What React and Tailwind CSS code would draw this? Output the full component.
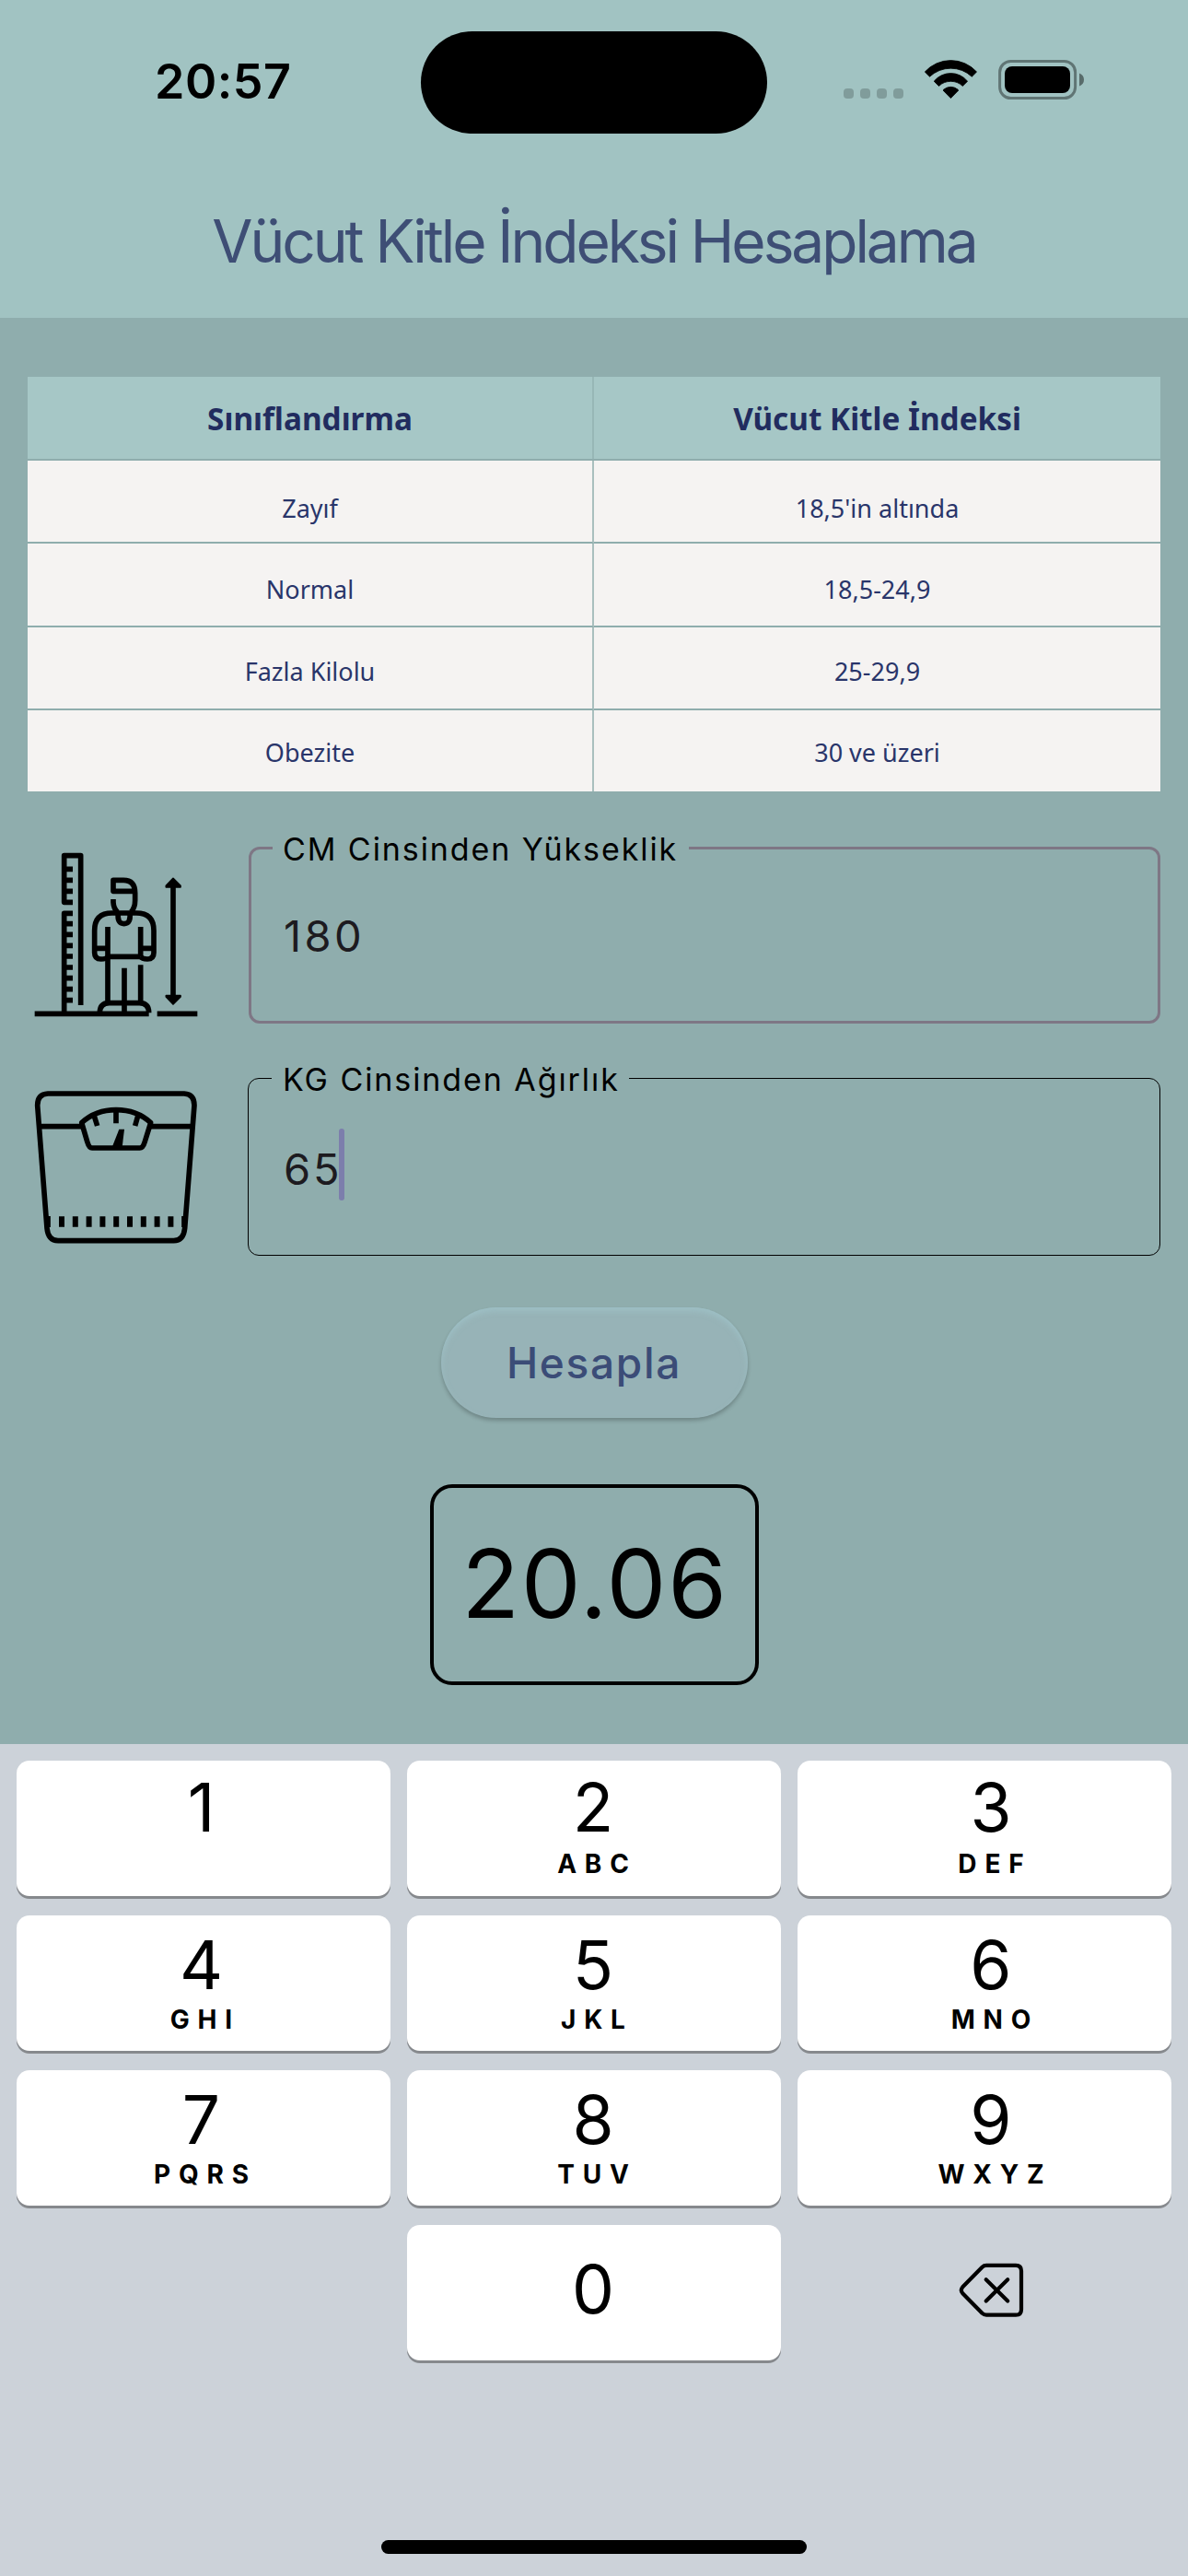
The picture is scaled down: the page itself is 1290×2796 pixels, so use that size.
import React from "react";

const ROWS = [
  { name: "Zayıf", range: "18,5'in altında", cls: "h-[90px] pt-[34px] border-b-2" },
  { name: "Normal", range: "18,5-24,9", cls: "h-[91px] pt-[32px] border-b-2" },
  { name: "Fazla Kilolu", range: "25-29,9", cls: "h-[90px] pt-[30px] border-b-2" },
  { name: "Obezite", range: "30 ve üzeri", cls: "h-[88px] pt-[28px]" },
];

const KEYS = [
  ["1", ""], ["2", "ABC"], ["3", "DEF"],
  ["4", "GHI"], ["5", "JKL"], ["6", "MNO"],
  ["7", "PQRS"], ["8", "TUV"], ["9", "WXYZ"],
];

const COLUMN_PADDING = ["pr-[5px]", "pr-[2px]", "pl-[14px]"];

function StatusBar() {
  return (
    <div className="grid h-[178px] grid-cols-[457px_376px_457px] items-start">
      <div className="pt-[59px] pl-[168px] text-[52px] leading-[60px] font-semibold tracking-[0.5px] text-black">20:57</div>
      <div className="mt-[33.5px] h-[111px] rounded-full bg-black" />
      <div className="flex pt-[64px] pl-[83px]">
        <div className="mt-[32px] flex gap-[7px]">
          {[0, 1, 2, 3].map((i) => (
            <div key={i} className="size-[11px] rounded-[4px] bg-black/20" />
          ))}
        </div>
        <svg className="ml-[22px]" width="59" height="45" viewBox="103 14 59 45" fill="#000" stroke="#000" strokeWidth="0.8" strokeLinejoin="round">
          <path d="M104.3 28A38 38 0 0 1 160.5 28L155.3 33.2A33.5 33.5 0 0 0 109.5 33.2Z" />
          <path d="M114.2 38.2A23.5 23.5 0 0 1 150.6 38.2L145.3 43.4A18.9 18.9 0 0 0 119.5 43.4Z" />
          <path d="M124 48A11.5 11.5 0 0 1 140.8 48L132.4 56.6Z" />
        </svg>
        <svg className="ml-[20px]" width="96" height="45" viewBox="182 14 96 45">
          <rect x="185.6" y="16.4" width="82" height="40.2" rx="12" fill="none" stroke="#000" strokeOpacity="0.4" strokeWidth="3" />
          <rect x="191" y="22" width="71" height="29" rx="8" fill="#000" />
          <path d="M272 29.5Q277 31.5 277 36.5Q277 41.5 272 43.5Z" fill="#000" fillOpacity="0.45" />
        </svg>
      </div>
    </div>
  );
}

function HeightIcon() {
  return (
    <svg className="block blur-[0.6px]" width="182" height="182" viewBox="105 99 546 546" fill="none" stroke="#000" strokeWidth="17" strokeLinecap="butt" strokeLinejoin="round">
      <path d="M237 268H209V116H263V603M209 160H237M209 196H237M209 232H237" />
      <path d="M209 631V304H237M209 338H237M209 373H237M209 409H237M209 444H237M209 480H237M209 515H237M209 551H237M209 587H237" />
      <path d="M113 631H485M512 631H643" />
      <path d="M440 232H369V196H402Q440 196 440 238V262Q440 286 427 300M369 258V268Q370 288 383 300" />
      <path d="M385 303Q381 338 404 338Q427 338 423 303" />
      <path d="M352 445Q346 453 329 453Q308 453 308 432V360Q308 303 365 303H444Q501 303 501 360V432Q501 453 480 453Q463 453 458 445M308 418H351M458 418H501" />
      <path d="M351 348V595M458 348V445M351 445H458M458 472V595M405 482V631" />
      <path d="M325 628Q325 596 356 596H454Q485 596 485 628" />
      <path d="M564 205V585" />
      <path d="M564 190L588 214V219H541V214ZM564 600L588 576V572H541V576Z" fill="#000" strokeWidth="5" />
    </svg>
  );
}

function ScaleIcon() {
  return (
    <svg className="block blur-[0.6px]" width="182" height="170" viewBox="105 875 546 510" fill="none" stroke="#000" strokeWidth="17" strokeLinejoin="round">
      <path d="M156 890H600Q633 892 633 928L602 1328Q598 1369 566 1369H189Q157 1369 153 1328L122 928Q122 892 156 890Z" />
      <path d="M128 997H268M490 997H627" />
      <path d="M266 985Q312 943 378 943Q446 943 491 985L472 1046Q466 1067 455 1067H300Q290 1067 284 1046Z" />
      <path d="M378 945V987M306 960L317 995M450 960L440 995" />
      <path d="M388 1006H405L398 1065H365Z" fill="#000" stroke="none" />
      <path d="M192 1307H570" strokeWidth="35" strokeDasharray="18 26.4" />
      <path d="M160 1289V1325M596 1289V1325" strokeWidth="9" />
    </svg>
  );
}

function ResultTable() {
  return (
    <div className="mt-[64px] h-[450px] overflow-hidden font-['Noto_Sans',sans-serif] text-[27px] leading-[36px] text-[#29356a]">
      <div className="grid h-[91px] grid-cols-[615px_615px] border-b-2 border-[#8fadad] bg-[#a6c7c6] text-center text-[33.3px] leading-[48px] font-bold text-[#212c5f]">
        <div className="border-r-2 border-[#97b7b6] pt-[21px]">Sınıflandırma</div>
        <div className="pt-[21px]">Vücut Kitle İndeksi</div>
      </div>
      {ROWS.map((row) => (
        <div key={row.name} className="grid grid-cols-[615px_615px] bg-[#f5f3f2] text-center">
          <div className={`border-r-2 border-r-[#a9bfbe] border-b-[#8fadad] ${row.cls}`}>{row.name}</div>
          <div className={`border-[#8fadad] ${row.cls}`}>{row.range}</div>
        </div>
      ))}
    </div>
  );
}

function Key({ digit, letters, column, first, last }) {
  return (
    <div className={`flex h-[147px] flex-col items-center rounded-[14px] bg-white shadow-[0_3px_0_#86898d] ${COLUMN_PADDING[column]}`}>
      <div className={`text-[73px] leading-[80px] ${last ? "mt-[30px]" : first ? "mt-[11px]" : "mt-[14px]"}`}>{digit}</div>
      {letters && (
        <div className={`-mr-[8.8px] text-[28px] leading-[34px] font-bold tracking-[8.8px] ${first ? "mt-[4px]" : "mt-[2px]"}`}>{letters}</div>
      )}
    </div>
  );
}

function Keyboard() {
  return (
    <div className="flex h-[903px] flex-col items-center bg-[#ccd2d9] pt-[18px]">
      <div className="grid grid-cols-[406px_406px_406px] gap-x-[18px] gap-y-[21px]">
        {KEYS.map(([digit, letters], i) => (
          <Key key={digit} digit={digit} letters={letters} column={i % 3} first={i < 3} />
        ))}
        <div />
        <Key digit="0" column={1} last />
        <div className="flex h-[147px] items-center justify-center pb-[5px] pl-[16px]">
          <svg width="74" height="64" viewBox="20 14 74 64" fill="none" stroke="#000" strokeWidth="4.2" strokeLinecap="round" strokeLinejoin="round">
            <path d="M51 18.8H83Q89 18.8 89 24.8V66.7Q89 72.7 83 72.7H51Q48.5 72.7 46.5 70.8L25.3 49.2Q22.3 45.7 25.3 42.3L46.5 20.7Q48.5 18.8 51 18.8Z" />
            <path d="M50.7 34.2L74.2 57.5M74.2 34.2L50.7 57.5" />
          </svg>
        </div>
      </div>
      <div className="mt-[195px] h-[15px] w-[462px] rounded-full bg-black" />
    </div>
  );
}

export default function App() {
  return (
    <div className="h-[2796px] w-[1290px] overflow-hidden bg-[#8fadad] font-['Inter',sans-serif] text-black">
      <header className="h-[345px] bg-[#a1c3c2]">
        <StatusBar />
        <h1 className="mt-[44px] text-center text-[64px] leading-[80px] tracking-[-3.05px] whitespace-nowrap text-[#3e4e75]">Vücut Kitle İndeksi Hesaplama</h1>
      </header>

      <main className="flex h-[1548px] flex-col px-[30px]">
        <ResultTable />

        <div className="mt-[43px] flex">
          <div className="mt-[21px] ml-[5px] w-[235px]">
            <HeightIcon />
          </div>
          <fieldset className="h-[209px] flex-1 rounded-[12px] border-3 border-[#7e7785]">
            <legend className="ml-[23px] pt-[3px] pr-[12px] pl-[11px] text-[34px] leading-[34px] tracking-[1.92px]">CM Cinsinden Yükseklik</legend>
            <div className="mt-[49px] pl-[35px] text-[47px] leading-[56px] tracking-[3.4px] text-[#1d1b20]">180</div>
          </fieldset>
        </div>

        <div className="mt-[41px] flex">
          <div className="mt-[30px] ml-[5px] w-[234px]">
            <ScaleIcon />
          </div>
          <fieldset className="h-[211px] flex-1 rounded-[12px] border border-black">
            <legend className="ml-[25px] pt-[3px] pr-[10px] pl-[12px] text-[34px] leading-[34px] tracking-[1.92px]">KG Cinsinden Ağırlık</legend>
            <div className="mt-[36px] flex h-[78px] pl-[38px]">
              <span className="mt-[16px] text-[47px] leading-[56px] tracking-[2.9px] text-[#1d1b20]">65</span>
              <span className="-ml-[4px] h-[78px] w-[6px] rounded-full bg-[#7c7eac]" />
            </div>
          </fieldset>
        </div>

        <button className="mt-[56px] h-[120px] w-[333px] self-center rounded-full bg-[#97b3b7] pb-px text-[46px] leading-[56px] font-medium tracking-[1.7px] text-[#3b4c77] shadow-[0_3px_4px_rgba(0,0,0,0.22),inset_0_4px_6px_rgba(160,197,203,0.7)]">Hesapla</button>

        <div className="mt-[72px] flex h-[218px] w-[357px] justify-center self-center rounded-[24px] border-4 border-black pt-[42px] pl-[2px] text-[103px] leading-[124px] tracking-[1.7px]">20.06</div>
      </main>

      <Keyboard />
    </div>
  );
}
